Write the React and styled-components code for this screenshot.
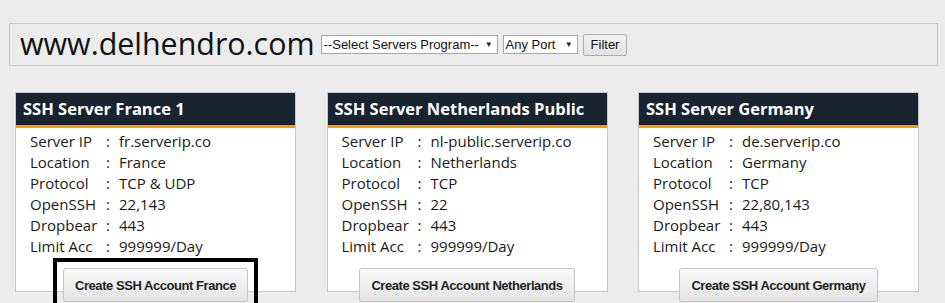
import styled, { createGlobalStyle } from 'styled-components'

const GlobalStyle = createGlobalStyle`
  html, body {
    margin: 0;
    background: #ececec;
    font-family: "Open Sans", "DejaVu Sans", sans-serif;
  }
`

const servers = [
  {
    name: 'SSH Server France 1',
    country: 'France',
    rows: [
      ['Server IP', 'fr.serverip.co'],
      ['Location', 'France'],
      ['Protocol', 'TCP & UDP'],
      ['OpenSSH', '22,143'],
      ['Dropbear', '443'],
      ['Limit Acc', '999999/Day']
    ],
    marked: true
  },
  {
    name: 'SSH Server Netherlands Public',
    country: 'Netherlands',
    rows: [
      ['Server IP', 'nl-public.serverip.co'],
      ['Location', 'Netherlands'],
      ['Protocol', 'TCP'],
      ['OpenSSH', '22'],
      ['Dropbear', '443'],
      ['Limit Acc', '999999/Day']
    ]
  },
  {
    name: 'SSH Server Germany',
    country: 'Germany',
    rows: [
      ['Server IP', 'de.serverip.co'],
      ['Location', 'Germany'],
      ['Protocol', 'TCP'],
      ['OpenSSH', '22,80,143'],
      ['Dropbear', '443'],
      ['Limit Acc', '999999/Day']
    ]
  }
]

function App () {
  return (
    <Page>
      <GlobalStyle />
      <TopBar>
        <SiteName>www.delhendro.com</SiteName>
        <Dropdown width={177}>
          --Select Servers Program--
          <Arrow>▼</Arrow>
        </Dropdown>
        <Dropdown width={75}>
          Any Port
          <Arrow>▼</Arrow>
        </Dropdown>
        <FilterButton>Filter</FilterButton>
      </TopBar>

      <Cards>
        {servers.map(server => (
          <Card key={server.name}>
            <CardHead>{server.name}</CardHead>
            <Details>
              {server.rows.map(([label, value]) => (
                <Row key={label}>
                  <span>{label}</span>
                  <span>:</span>
                  <span>{value}</span>
                </Row>
              ))}
            </Details>
            <Actions>
              <Frame marked={server.marked ? 1 : 0}>
                <CreateButton>Create SSH Account {server.country}</CreateButton>
              </Frame>
            </Actions>
          </Card>
        ))}
      </Cards>
    </Page>
  )
}

export default App

const Page = styled.div`
  padding-top: 23px;
  height: 280px;
  overflow: hidden;
`

const TopBar = styled.div`
  margin: 0 7px 0 9px;
  height: 43px;
  box-sizing: border-box;
  border: 1px solid #c9c9c9;
  display: flex;
  align-items: center;
  padding: 0 10px;
  gap: 5px;
`

const SiteName = styled.div`
  font-size: 30.4px;
  line-height: 1;
  color: #111;
  margin-right: 1px;
  margin-top: -1px;
`

const Dropdown = styled.div`
  width: ${p => p.width}px;
  height: 19px;
  box-sizing: border-box;
  background: #fff;
  border: 1px solid #a6a6a6;
  display: flex;
  align-items: center;
  justify-content: space-between;
  padding: 0 4px 0 2px;
  font-family: "Liberation Sans", Arial, sans-serif;
  font-size: 13px;
  color: #111;
  white-space: nowrap;
`

const Arrow = styled.span`
  font-size: 8px;
  color: #222;
`

const FilterButton = styled.button`
  height: 22px;
  padding: 0 7px;
  border: 1px solid #acacac;
  border-radius: 2px;
  background: linear-gradient(#f2f2f2, #e2e2e2);
  font-family: "Liberation Sans", Arial, sans-serif;
  font-size: 13px;
  color: #111;
`

const Cards = styled.div`
  margin-top: 26px;
  padding-left: 15px;
  display: grid;
  grid-template-columns: repeat(3, 281px);
  column-gap: 30.5px;
`

const Card = styled.div`
  height: 200px;
  box-sizing: border-box;
  background: #fff;
  border: 1px solid #c8c8c8;
`

const CardHead = styled.div`
  height: 32px;
  background: #18242f;
  border-bottom: 3px solid #ff9900;
  color: #fff;
  padding: 0 7px;
  font-size: 16.5px;
  font-weight: 700;
  line-height: 32px;
  white-space: nowrap;
`

const Details = styled.div`
  padding: 3px 0 0 14px;
`

const Row = styled.div`
  display: grid;
  grid-template-columns: 76px 13px 1fr;
  font-size: 15px;
  line-height: 21px;
  color: #1a1a1a;
`

const Actions = styled.div`
  display: flex;
  justify-content: center;
  margin-top: ${p => 11}px;
`

const Frame = styled.div`
  display: flex;
  padding: 6px;
  margin: -10px 0 0;
  border: 4px solid ${p => (p.marked ? '#000' : 'transparent')};
  position: relative;
  z-index: 1;
`

const CreateButton = styled.button`
  height: 34px;
  padding: 0 11px;
  border: 1px solid #c4c4c4;
  border-radius: 3px;
  background: linear-gradient(#fafafa, #e4e4e4);
  font-family: "Liberation Sans", Arial, sans-serif;
  font-size: 13px;
  font-weight: 700;
  letter-spacing: -0.45px;
  color: #222;
`
